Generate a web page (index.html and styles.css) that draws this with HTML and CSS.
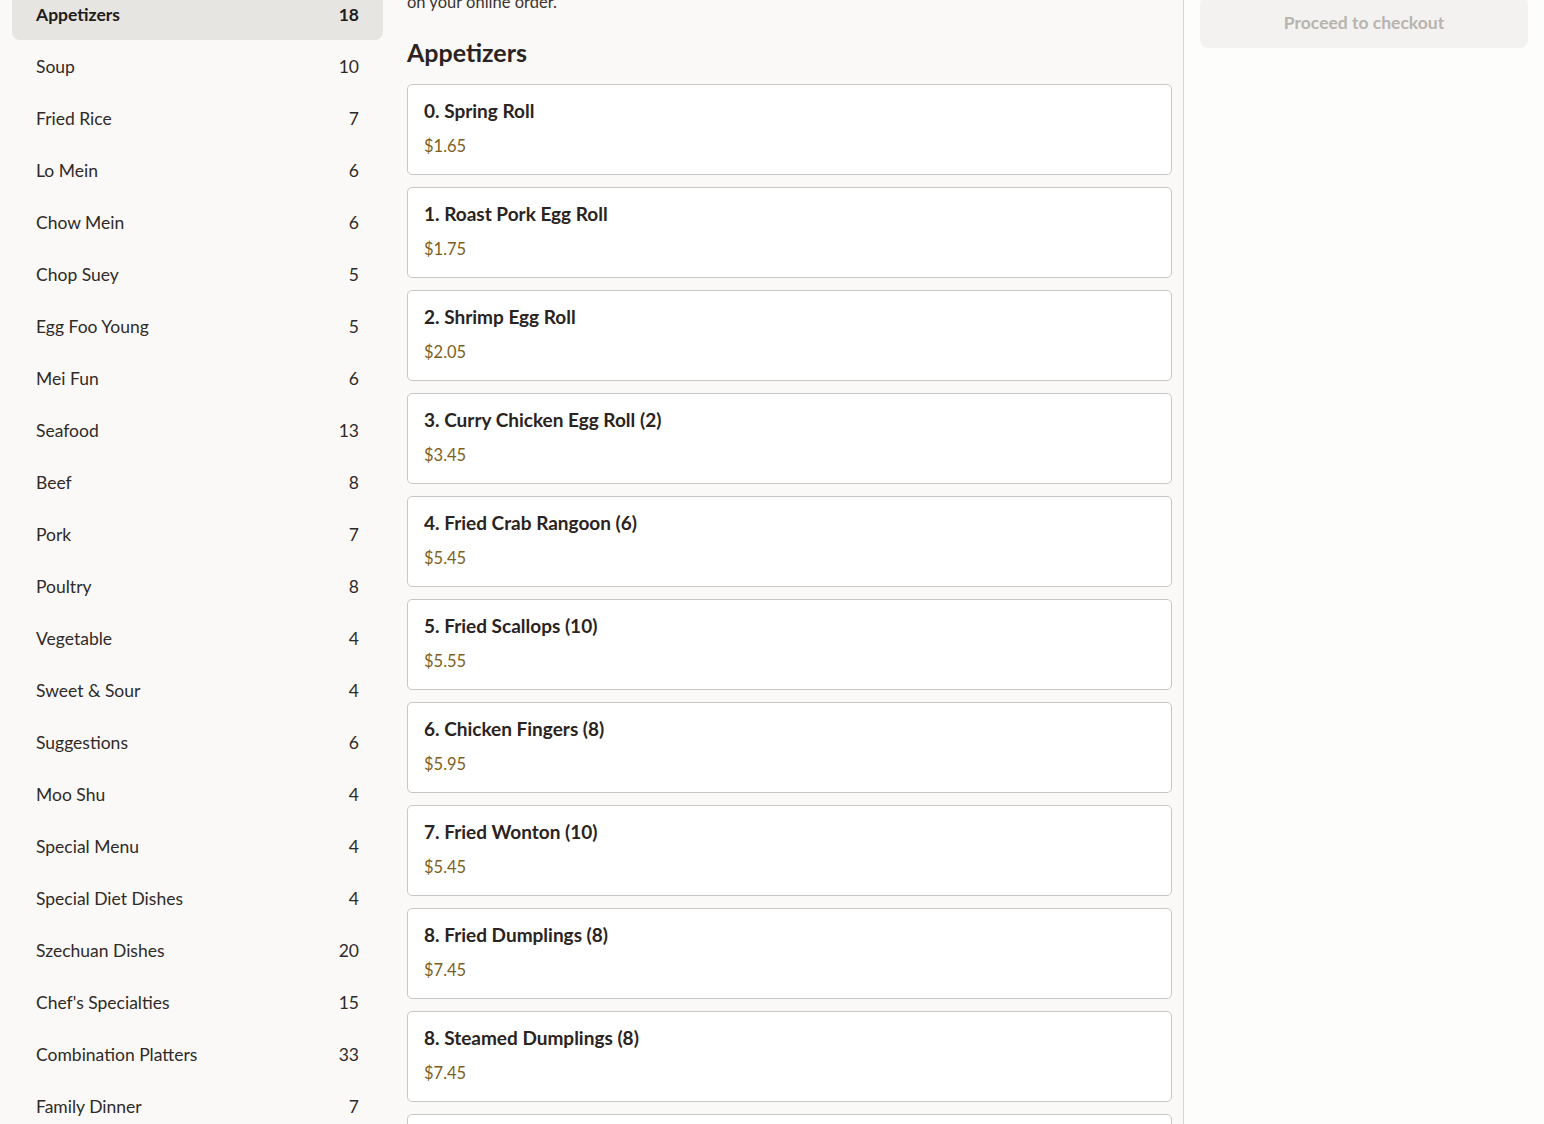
FILE: index.html
```html
<!DOCTYPE html>
<html>
<head>
<meta charset="utf-8">
<link rel="stylesheet" href="styles.css">
</head>
<body>
<div class="page">
  <aside class="sidebar">
    <ul class="cats">
      <li class="cat active"><span>Appetizers</span><span>18</span></li>
      <li class="cat"><span>Soup</span><span>10</span></li>
      <li class="cat"><span>Fried Rice</span><span>7</span></li>
      <li class="cat"><span>Lo Mein</span><span>6</span></li>
      <li class="cat"><span>Chow Mein</span><span>6</span></li>
      <li class="cat"><span>Chop Suey</span><span>5</span></li>
      <li class="cat"><span>Egg Foo Young</span><span>5</span></li>
      <li class="cat"><span>Mei Fun</span><span>6</span></li>
      <li class="cat"><span>Seafood</span><span>13</span></li>
      <li class="cat"><span>Beef</span><span>8</span></li>
      <li class="cat"><span>Pork</span><span>7</span></li>
      <li class="cat"><span>Poultry</span><span>8</span></li>
      <li class="cat"><span>Vegetable</span><span>4</span></li>
      <li class="cat"><span>Sweet &amp; Sour</span><span>4</span></li>
      <li class="cat"><span>Suggestions</span><span>6</span></li>
      <li class="cat"><span>Moo Shu</span><span>4</span></li>
      <li class="cat"><span>Special Menu</span><span>4</span></li>
      <li class="cat"><span>Special Diet Dishes</span><span>4</span></li>
      <li class="cat"><span>Szechuan Dishes</span><span>20</span></li>
      <li class="cat"><span>Chef's Specialties</span><span>15</span></li>
      <li class="cat"><span>Combination Platters</span><span>33</span></li>
      <li class="cat"><span>Family Dinner</span><span>7</span></li>
    </ul>
  </aside>
  <main class="menu">
    <p class="note">on your online order.</p>
    <h2 class="section-title">Appetizers</h2>
    <div class="items">
      <div class="item"><div class="name">0. Spring Roll</div><div class="price">$1.65</div></div>
      <div class="item"><div class="name">1. Roast Pork Egg Roll</div><div class="price">$1.75</div></div>
      <div class="item"><div class="name">2. Shrimp Egg Roll</div><div class="price">$2.05</div></div>
      <div class="item"><div class="name">3. Curry Chicken Egg Roll (2)</div><div class="price">$3.45</div></div>
      <div class="item"><div class="name">4. Fried Crab Rangoon (6)</div><div class="price">$5.45</div></div>
      <div class="item"><div class="name">5. Fried Scallops (10)</div><div class="price">$5.55</div></div>
      <div class="item"><div class="name">6. Chicken Fingers (8)</div><div class="price">$5.95</div></div>
      <div class="item"><div class="name">7. Fried Wonton (10)</div><div class="price">$5.45</div></div>
      <div class="item"><div class="name">8. Fried Dumplings (8)</div><div class="price">$7.45</div></div>
      <div class="item"><div class="name">8. Steamed Dumplings (8)</div><div class="price">$7.45</div></div>
      <div class="item"><div class="name">9. Barbecued Spare Ribs</div><div class="price">$9.95</div></div>
    </div>
  </main>
  <aside class="cart">
    <button class="checkout">Proceed to checkout</button>
  </aside>
</div>
</body>
</html>
```
FILE: styles.css
```css
html, body {
  margin: 0;
  padding: 0;
  height: 100%;
  overflow: hidden;
}
body {
  background: #faf9f7;
  font-family: Lato, "Noto Sans", sans-serif;
  color: #2a2321;
}
.page {
  display: grid;
  grid-template-columns: 395px 789px 1fr;
  margin-top: -12px;
  height: calc(100% + 12px);
}
.sidebar {
  padding: 0 12px;
}
.cats {
  list-style: none;
  margin: 0;
  padding: 0;
}
.cat {
  display: flex;
  justify-content: space-between;
  align-items: center;
  height: 52px;
  padding: 0 24px;
  font-size: 17.5px;
  color: #2f2a28;
  border-radius: 8px;
}
.cat.active {
  background: #e6e5e2;
  font-weight: 700;
  color: #221c1a;
}
.menu {
  padding: 4px 11px 0 12px;
  border-right: 1px solid #d8d6d2;
}
.note {
  margin: 0;
  font-size: 16.5px;
  line-height: 20px;
  color: #3a3431;
}
.section-title {
  margin: 25px 0 17px;
  font-size: 25px;
  font-weight: 700;
  line-height: 30px;
  color: #2a2321;
}
.items {
  display: flex;
  flex-direction: column;
  gap: 12px;
}
.item {
  height: 91px;
  box-sizing: border-box;
  background: #fff;
  border: 1px solid #c9c7c4;
  border-radius: 5px;
  padding: 15px 16px 0;
}
.name {
  font-size: 19px;
  font-weight: 700;
  line-height: 22px;
  color: #2a2321;
}
.price {
  margin-top: 13px;
  font-size: 16.5px;
  line-height: 22px;
  color: #7d5f22;
}
.cart {
  background: #fdfdfc;
  padding: 8px 16px;
}
.checkout {
  width: 100%;
  height: 52px;
  border: none;
  border-radius: 8px;
  background: #f3f2f0;
  color: #b7b4ae;
  font-family: inherit;
  font-size: 17.5px;
  font-weight: 700;
}
```
